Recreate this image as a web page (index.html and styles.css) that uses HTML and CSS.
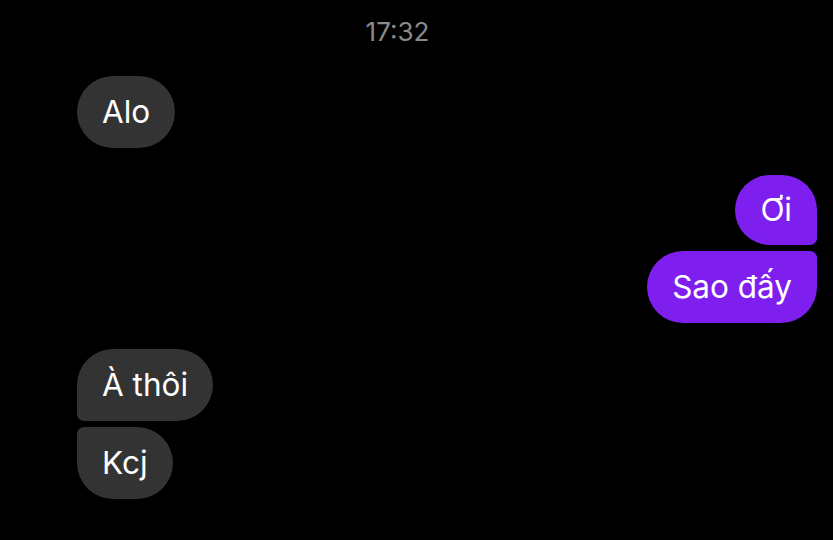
FILE: index.html
```html
<!DOCTYPE html>
<html lang="vi">
<head>
<meta charset="utf-8">
<link rel="stylesheet" href="styles.css">
</head>
<body>
<div class="chat">
  <div class="time">17:32</div>
  <div class="group in first-group">
    <div class="bubble single">Alo</div>
  </div>
  <div class="group out">
    <div class="bubble top">Ơi</div>
    <div class="bubble bottom">Sao đấy</div>
  </div>
  <div class="group in">
    <div class="bubble top">À thôi</div>
    <div class="bubble bottom">Kcj</div>
  </div>
</div>
</body>
</html>
```
FILE: styles.css
```css
html, body {
  margin: 0;
  padding: 0;
  background: #000;
}
body {
  width: 833px;
  height: 540px;
  overflow: hidden;
  font-family: Inter, "Noto Sans", sans-serif;
}
.chat {
  display: flex;
  flex-direction: column;
  padding: 16px 16px 0 77px;
}
.time {
  text-align: center;
  color: #8a8a8a;
  font-size: 26px;
  line-height: 32px;
  height: 32px;
  margin-left: -77px;
  margin-right: -16px;
  padding-right: 38px;
}
.group {
  display: flex;
  flex-direction: column;
  gap: 6px;
}
.first-group { margin-top: 28px; }
.group.out {
  align-items: flex-end;
  margin-top: 27px;
}
.group.in { align-items: flex-start; }
.group.out + .group.in { margin-top: 26px; }
.bubble {
  height: 72px;
  line-height: 72px;
  padding: 0 25px;
  font-size: 31.5px;
  color: #fff;
  border-radius: 36px;
  white-space: nowrap;
}
.in .bubble { background: #333333; }
.out .bubble { background: #7e1ff0; }
.in .bubble.top { border-bottom-left-radius: 7px; }
.in .bubble.bottom { border-top-left-radius: 7px; }
.out .bubble.top { border-bottom-right-radius: 7px; height: 70px; line-height: 70px; }
.out .bubble.bottom { border-top-right-radius: 7px; }
```
